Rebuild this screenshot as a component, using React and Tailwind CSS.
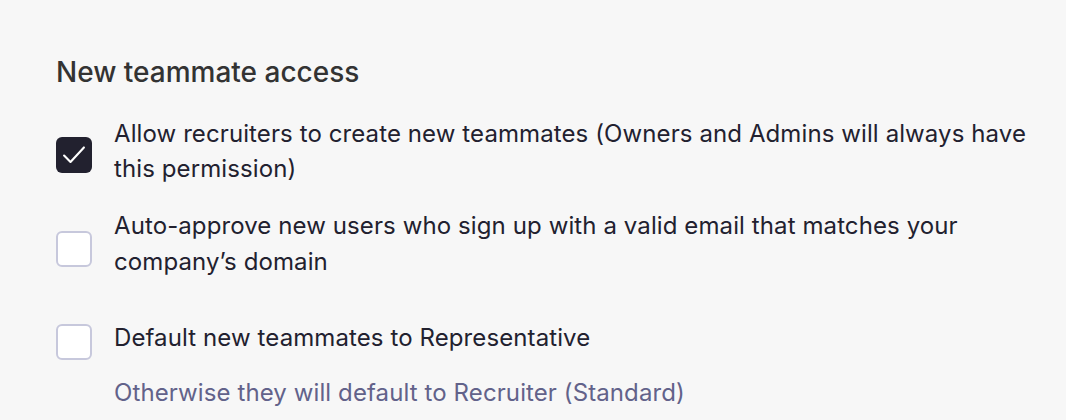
import React from "react";

function Box({ checked }) {
  return checked ? (
    <div className="w-[36px] h-[36px] shrink-0 rounded-[6px] bg-[#22212f] flex items-center justify-center mt-[7px]">
      <svg width="28" height="28" viewBox="0 0 24 24" fill="none" stroke="white" strokeWidth="1.8" strokeLinecap="round" strokeLinejoin="round">
        <path d="M3.5 12.5l5.5 5.5L20.5 5.5" />
      </svg>
    </div>
  ) : (
    <div className="w-[36px] h-[36px] shrink-0 rounded-[6px] bg-white border-2 border-[#c7c8dc] mt-[10px]" />
  );
}

export default function App() {
  return (
    <div className="min-h-[420px] bg-[#f7f7f7] pl-[56px] pr-[20px] pt-[54px]" style={{ fontFamily: "Inter, 'Noto Sans', sans-serif" }}>
      <h2 className="text-[28px] leading-[36px] font-medium text-[#333333]">New teammate access</h2>
      <div className="mt-[26px] flex flex-col">
        <div className="flex items-center gap-[22px]">
          <Box checked />
          <p className="text-[24px] leading-[35px] tracking-[0.1px] text-[#22212f] max-w-[930px]">
            Allow recruiters to create new teammates (Owners and Admins will always have this permission)
          </p>
        </div>
        <div className="flex items-center gap-[22px] mt-[22px]">
          <Box />
          <p className="text-[24px] leading-[36px] tracking-[0.1px] text-[#22212f] max-w-[930px]">
            Auto-approve new users who sign up with a valid email that matches your company’s domain
          </p>
        </div>
        <div className="flex items-center gap-[22px] mt-[34px]">
          <Box />
          <p className="text-[24px] leading-[35px] tracking-[0.1px] text-[#22212f]">Default new teammates to Representative</p>
        </div>
        <p className="ml-[58px] mt-[15px] text-[24px] leading-[35px] tracking-[0.1px] text-[#62628a]">
          Otherwise they will default to Recruiter (Standard)
        </p>
      </div>
    </div>
  );
}
